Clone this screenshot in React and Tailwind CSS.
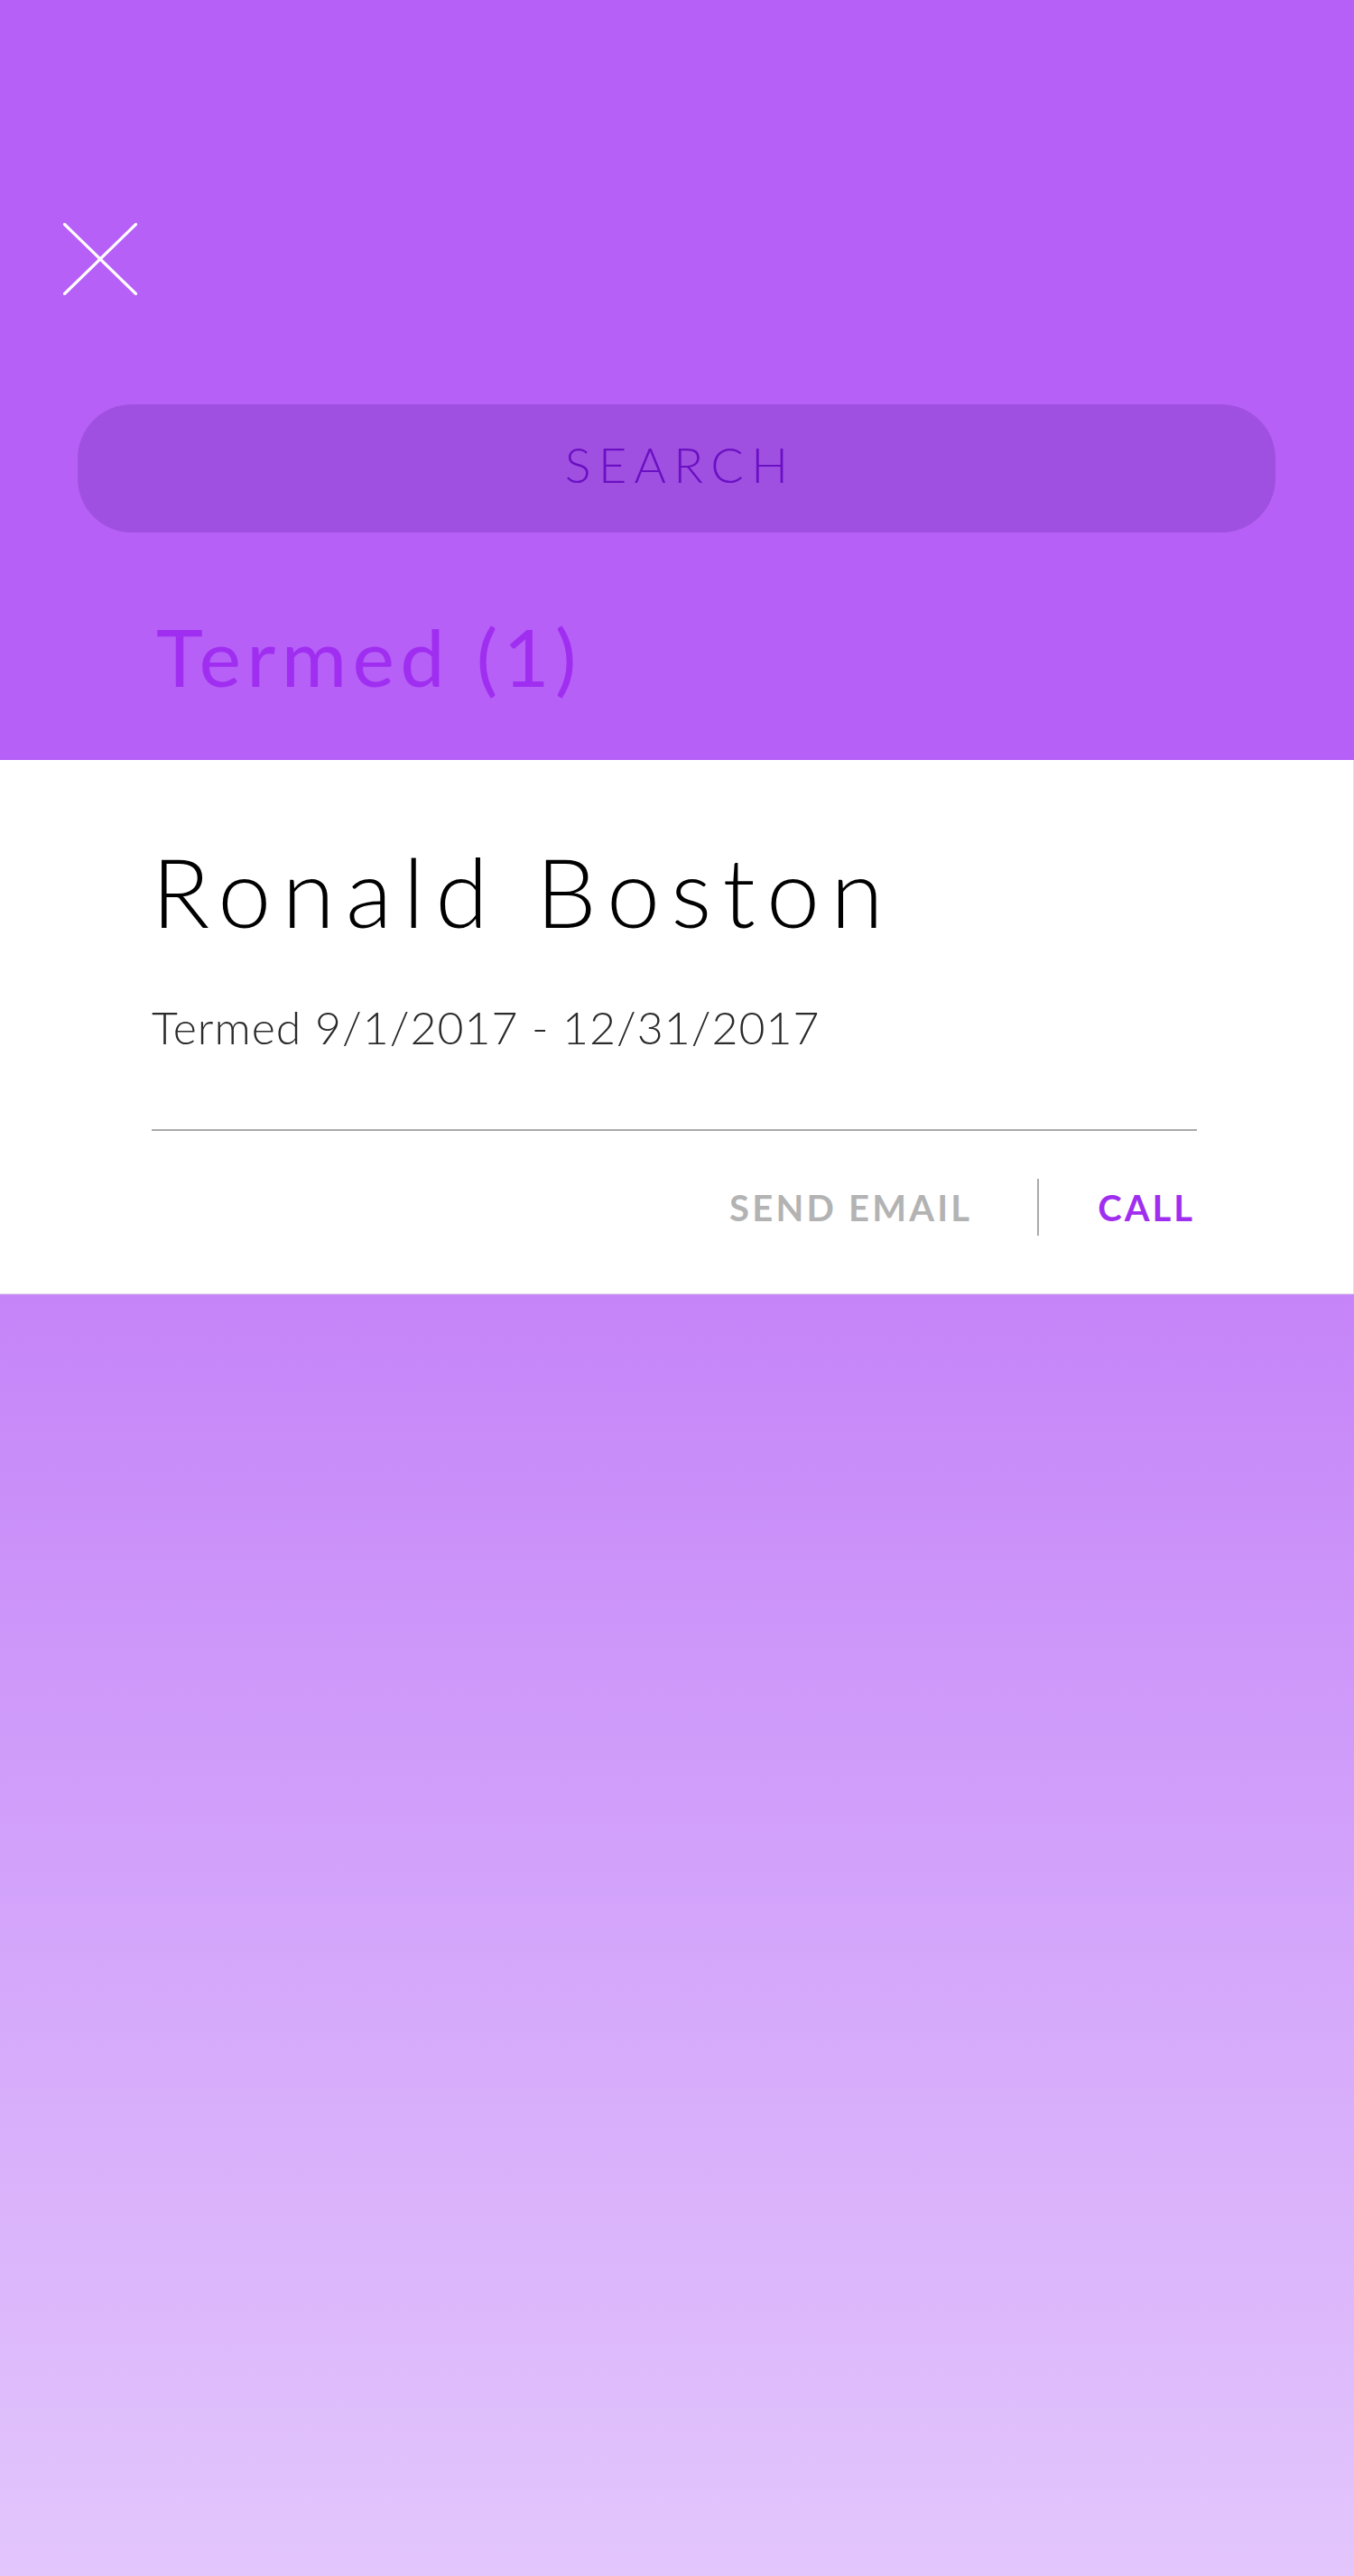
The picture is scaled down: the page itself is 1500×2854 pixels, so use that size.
import React from "react";

export default function App() {
  return (
    <div
      className="flex min-h-[2854px] w-[1500px] flex-col"
      style={{ fontFamily: "Lato, 'Noto Sans', sans-serif" }}
    >
      {/* Top purple header */}
      <div className="flex flex-col bg-[#b660f7] pb-[71px]">
        <div className="pl-[70px] pt-[247px]">
          <svg width="82" height="80" viewBox="0 0 82 80" fill="none">
            <line x1="1.5" y1="1.5" x2="80.5" y2="78.5" stroke="#ffffff" strokeWidth="3.2" strokeLinecap="round" />
            <line x1="80.5" y1="1.5" x2="1.5" y2="78.5" stroke="#ffffff" strokeWidth="3.2" strokeLinecap="round" />
          </svg>
        </div>
        <div className="ml-[86px] mr-[87px] mt-[121px] flex h-[142px] items-center justify-center rounded-[60px] bg-[#a050e0] pb-[8px] pl-[8px]">
          <span className="text-[54px] font-light leading-none tracking-[0.155em] text-[#6a10c4]">
            SEARCH
          </span>
        </div>
        <div className="mt-[93px] pl-[173px] text-[88px] font-normal leading-none tracking-[0.072em] text-[#a02ef0]">
          Termed (1)
        </div>
      </div>

      {/* White card */}
      <div className="flex flex-col border-r border-b border-[#e2dde6] bg-white pl-[168px] pr-[173px] pt-[92px] pb-[64px]">
        <div className="text-[106px] font-light leading-none tracking-[0.115em] text-black">
          Ronald Boston
        </div>
        <div className="mt-[73px] text-[50px] font-light leading-none tracking-[0.02em] text-[#2a2a2a]">
          Termed 9/1/2017 - 12/31/2017
        </div>
        <div className="mt-[88px] h-[2px] bg-[#aaaaaa]" />
        <div className="mt-[53px] flex h-[63px] items-center justify-end">
          <span className="text-[40px] font-bold leading-none tracking-[0.08em] text-[#b3b3b3]">
            SEND EMAIL
          </span>
          <div className="ml-[72px] mr-[65px] h-[63px] w-[2px] bg-[#aaaaaa]" />
          <span className="mr-[2px] text-[40px] font-bold leading-none tracking-[0.075em] text-[#a02ef0]">
            CALL
          </span>
        </div>
      </div>

      {/* Bottom gradient */}
      <div className="flex-1 bg-gradient-to-b from-[#c584f8] to-[#e3c6fc]" />
    </div>
  );
}
